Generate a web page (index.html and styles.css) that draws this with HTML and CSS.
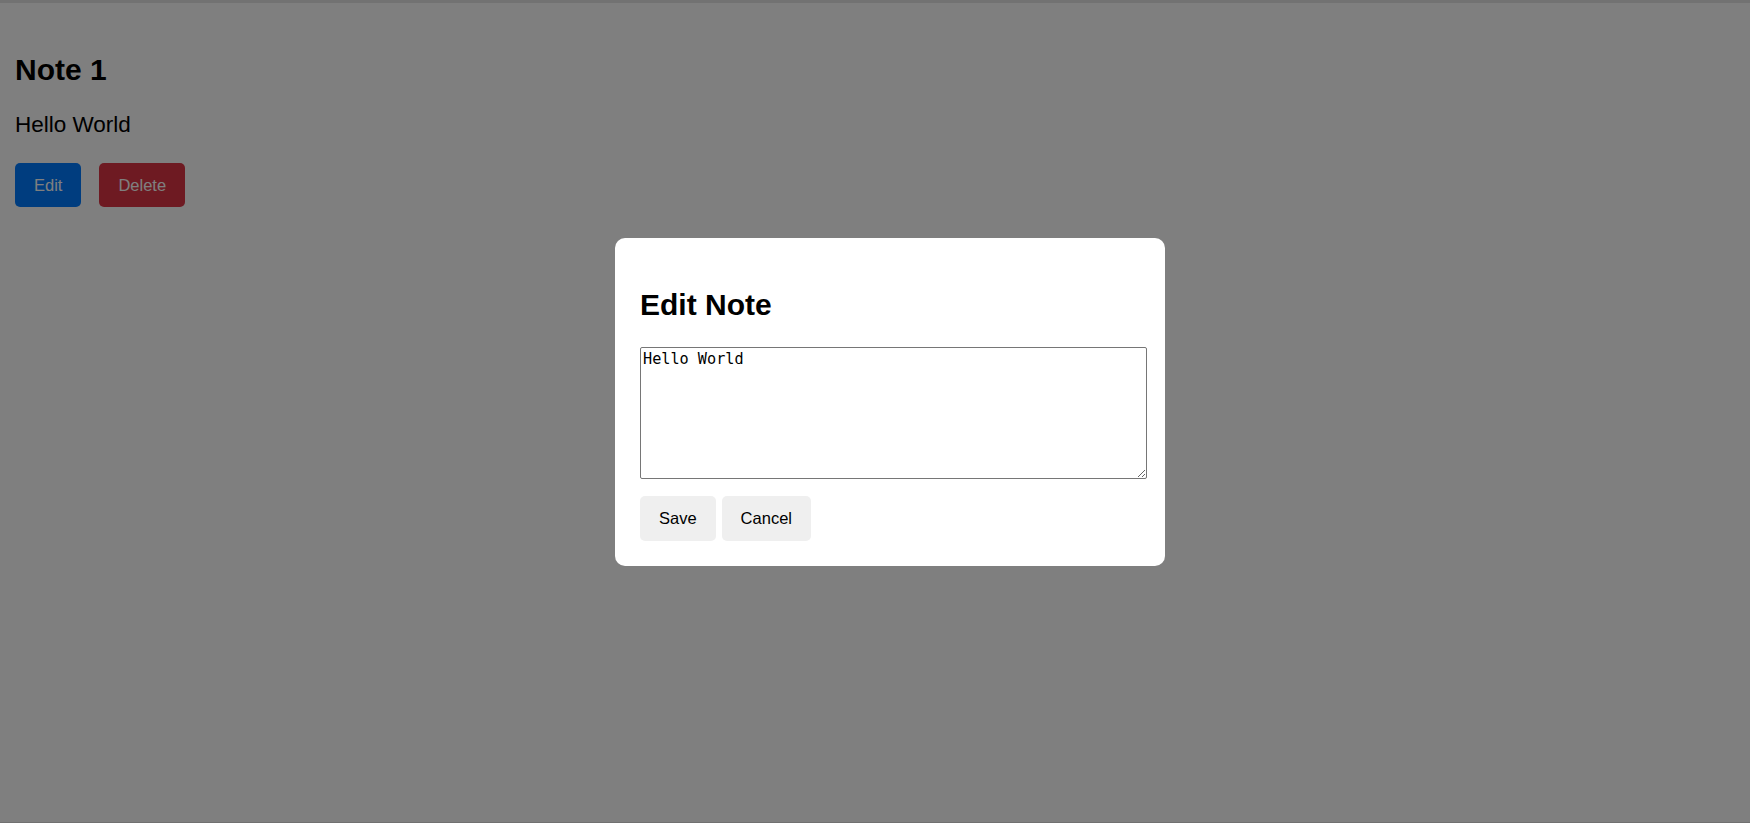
FILE: index.html
```html
<!DOCTYPE html>
<html lang="en">
<head>
<meta charset="utf-8">
<title>Notes</title>
<link rel="stylesheet" href="styles.css">
</head>
<body>
  <main class="page">
    <article class="note">
      <h2 class="note-title">Note 1</h2>
      <p class="note-body">Hello World</p>
      <div class="note-actions">
        <button class="btn btn-edit">Edit</button>
        <button class="btn btn-delete">Delete</button>
      </div>
    </article>
  </main>

  <div class="overlay">
    <div class="modal">
      <h2 class="modal-title">Edit Note</h2>
      <textarea class="modal-text">Hello World</textarea>
      <div class="modal-actions">
        <button class="btn btn-plain">Save</button>
        <button class="btn btn-plain">Cancel</button>
      </div>
    </div>
  </div>
</body>
</html>
```

FILE: styles.css
```css
html, body {
  margin: 0;
  padding: 0;
  background: #ffffff;
  font-family: "Liberation Sans", Arial, sans-serif;
  color: #000;
}

.page {
  padding: 54px 15px;
}

.note-title {
  margin: 0 0 26px;
  font-size: 30px;
  line-height: 32px;
  font-weight: bold;
}

.note-body {
  margin: 0 0 26px;
  font-size: 22.5px;
  line-height: 25px;
}

.note-actions {
  display: flex;
  gap: 18px;
}

.btn {
  font-family: "Liberation Sans", Arial, sans-serif;
  font-size: 16.5px;
  line-height: 19px;
  padding: 12.5px 19px;
  border: none;
  border-radius: 5px;
  margin: 0;
  cursor: pointer;
}

.btn-edit {
  background: #007bff;
  color: #fff;
}

.btn-delete {
  background: #dc3545;
  color: #fff;
}

.overlay {
  position: fixed;
  inset: 0;
  background: rgba(0, 0, 0, 0.5);
  box-shadow: inset 0 3px 0 rgba(0, 0, 0, 0.1), inset 0 -1px 0 rgba(0, 0, 0, 0.12);
}

.modal {
  position: absolute;
  left: 615px;
  top: 238px;
  width: 500px;
  padding: 25px;
  background: #fff;
  border-radius: 10px;
}

.modal-title {
  margin: 26px 0 26px;
  font-size: 30px;
  line-height: 32px;
  font-weight: bold;
}

.modal-text {
  display: block;
  box-sizing: content-box;
  width: 501px;
  height: 126px;
  margin: 0;
  padding: 2px;
  border: 1px solid #767676;
  border-radius: 2px;
  font-family: "DejaVu Sans Mono", "Liberation Mono", monospace;
  font-size: 15.2px;
  color: #000;
  background: #fff;
}

.modal-actions {
  display: flex;
  gap: 6px;
  margin-top: 17px;
}

.btn-plain {
  background: #efefef;
  color: #000;
  padding: 13px 19px;
}
```
